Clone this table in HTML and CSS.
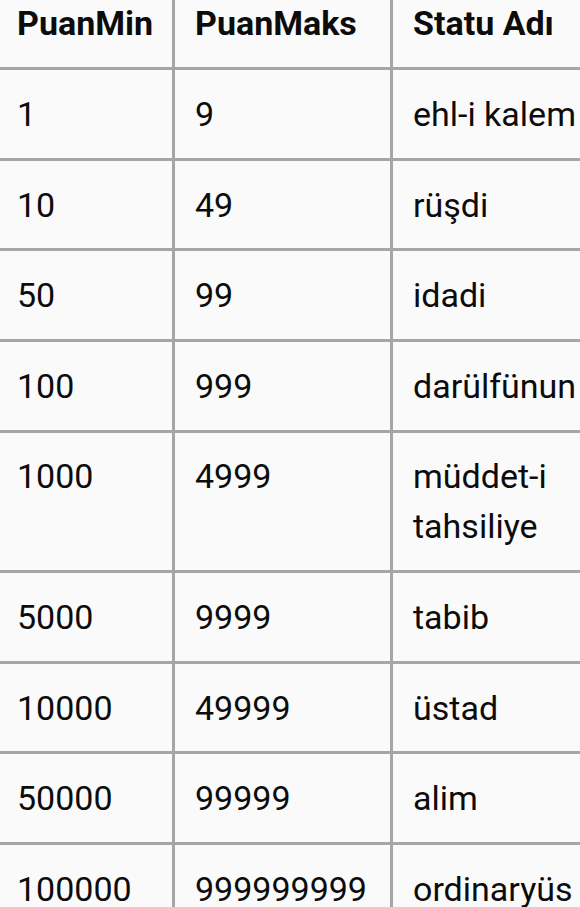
FILE: index.html
```html
<!DOCTYPE html>
<html lang="tr">
<head>
<meta charset="utf-8">
<title>Statu tablosu</title>
<link rel="stylesheet" href="styles.css">
</head>
<body>
<div class="wrap">
<table class="status-table">
  <colgroup>
    <col class="c1">
    <col class="c2">
    <col class="c3">
  </colgroup>
  <thead>
    <tr><th>PuanMin</th><th>PuanMaks</th><th>Statu Adı</th></tr>
  </thead>
  <tbody>
    <tr><td>1</td><td>9</td><td>ehl-i kalem</td></tr>
    <tr><td>10</td><td>49</td><td>rüşdi</td></tr>
    <tr><td>50</td><td>99</td><td>idadi</td></tr>
    <tr><td>100</td><td>999</td><td>darülfünun</td></tr>
    <tr><td>1000</td><td>4999</td><td>müddet-i<br>tahsiliye</td></tr>
    <tr><td>5000</td><td>9999</td><td>tabib</td></tr>
    <tr><td>10000</td><td>49999</td><td>üstad</td></tr>
    <tr><td>50000</td><td>99999</td><td>alim</td></tr>
    <tr><td>100000</td><td>999999999</td><td>ordinaryüs</td></tr>
  </tbody>
</table>
</div>
</body>
</html>
```
FILE: styles.css
```css
html, body {
  margin: 0;
  padding: 0;
  background: #fafafa;
  overflow: hidden;
}
.wrap {
  width: 700px;
  margin: -20.4px 0 0 -3px;
}
.status-table {
  border-collapse: separate;
  border-spacing: 0;
  table-layout: fixed;
  width: 680px;
  font-family: Roboto, "Noto Sans", sans-serif;
  font-size: 34px;
  line-height: 50px;
  color: #0c0c0c;
}
.c1 { width: 178px; }
.c2 { width: 218px; }
.c3 { width: 284px; }
.status-table th,
.status-table td {
  padding: 18.8px 20px;
  text-align: left;
  vertical-align: top;
  border-bottom: 3px solid #a6a6a6;
  border-right: 3px solid #a6a6a6;
  white-space: nowrap;
}
.status-table th {
  font-weight: 700;
}
.status-table td {
  font-weight: 400;
}
```
